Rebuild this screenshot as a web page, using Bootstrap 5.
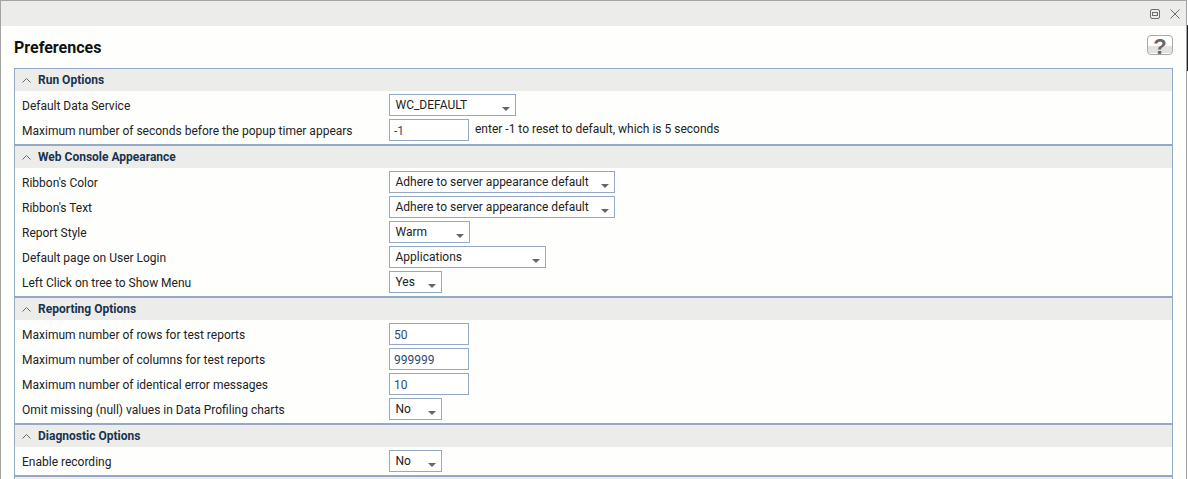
<!DOCTYPE html>
<html lang="en">
<head>
<meta charset="utf-8">
<title>Preferences</title>
<link href="https://cdn.jsdelivr.net/npm/bootstrap@5.3.0/dist/css/bootstrap.min.css" rel="stylesheet">
<style>
html,body{height:479px;overflow:hidden;background:#fff}
body{font-family:Roboto,"Liberation Sans",sans-serif;font-size:12px;color:#222}
.win{position:relative;height:479px;width:1187px;border-top:1px solid #a3a5a2;border-left:1px solid #a3a5a2;border-right:1px solid #a3a5a2;background:#fefffd;overflow:hidden}
.edge-mark{position:fixed;left:1187px;top:25px;width:1px;height:46px;background:#222}
.win-bar{height:25px;background:#ecedeb;padding-right:6px;gap:10px}
.win-bar svg{display:block}
.win-body{padding:0 13px}
.page-head{height:42px;padding-top:9px}
.page-title{font-size:16px;font-weight:700;line-height:22px;color:#111;margin:2px 0 0}
.help-btn{width:26px;height:20px;border:1px solid #a9a9a9;border-radius:4px;background:linear-gradient(#fff 0,#fff 58%,#e2e2e2 58%,#e2e2e2 92%,#fff 92%);color:#666;font-size:22px;font-weight:700;line-height:18px;padding:2px 0 0;text-align:center;font-family:"Liberation Sans",sans-serif}
.pref-panel{border:1px solid #93a9c6;border-bottom:0}
.pref-sec+.pref-sec{border-top:2px solid #93a9c6}
.sec-head{height:22px;background:#ecedeb;color:#19334f;font-weight:700;padding-left:7px;gap:7px;line-height:22px}
.sec-rows{padding:3px 0;gap:3px}
.pref-row{height:22px;padding-left:7px}
.pref-lab{width:367px;padding-top:4px;line-height:16px;color:#222}
.fld{height:22px;border:1px solid #93a9c6;background:#fff;line-height:18px;padding:1px 5.5px 0;color:#222;position:relative;display:block;flex:none}
.fld-in{width:80px;color:#2e4a6b;padding:2px 4px 0}
.fld-sel::after{content:"";position:absolute;right:5px;top:12px;border-left:4px solid transparent;border-right:4px solid transparent;border-top:4px solid #666}
.hint{margin-left:6px;padding-top:1px;line-height:18px;color:#222}
.w-a{width:127px}.w-b{width:226px}.w-c{width:81px}.w-d{width:157px}.w-e{width:53px}
</style>
</head>
<body>
<div class="win">
  <div class="win-bar d-flex justify-content-end align-items-center">
    <svg width="10" height="10" viewBox="0 0 10 10" fill="none" stroke="#6f6f6f"><rect x=".5" y=".5" width="9" height="9" rx="1.5"/><rect x="2.5" y="3.5" width="5" height="3"/></svg>
    <svg width="10" height="10" viewBox="0 0 10 10" fill="none" stroke="#6f6f6f" stroke-width="1"><path d="M.5.5l9 9M9.5.5l-9 9"/></svg>
  </div>
  <div class="win-body">
    <div class="page-head d-flex justify-content-between align-items-start">
      <h1 class="page-title">Preferences</h1>
      <button type="button" class="help-btn">?</button>
    </div>
    <div class="pref-panel">
      <section class="pref-sec">
        <div class="sec-head d-flex align-items-center"><svg width="9" height="5" viewBox="0 0 9 5" fill="none" stroke="#666"><path d="M.5 4.5l4-4 4 4"/></svg><span>Run Options</span></div>
        <div class="sec-rows d-flex flex-column">
          <div class="pref-row d-flex"><div class="pref-lab">Default Data Service</div><div class="fld fld-sel w-a">WC_DEFAULT</div></div>
          <div class="pref-row d-flex"><div class="pref-lab">Maximum number of seconds before the popup timer appears</div><div class="fld fld-in">-1</div><div class="hint">enter -1 to reset to default, which is 5 seconds</div></div>
        </div>
      </section>
      <section class="pref-sec">
        <div class="sec-head d-flex align-items-center"><svg width="9" height="5" viewBox="0 0 9 5" fill="none" stroke="#666"><path d="M.5 4.5l4-4 4 4"/></svg><span>Web Console Appearance</span></div>
        <div class="sec-rows d-flex flex-column">
          <div class="pref-row d-flex"><div class="pref-lab">Ribbon's Color</div><div class="fld fld-sel w-b">Adhere to server appearance default</div></div>
          <div class="pref-row d-flex"><div class="pref-lab">Ribbon's Text</div><div class="fld fld-sel w-b">Adhere to server appearance default</div></div>
          <div class="pref-row d-flex"><div class="pref-lab">Report Style</div><div class="fld fld-sel w-c">Warm</div></div>
          <div class="pref-row d-flex"><div class="pref-lab">Default page on User Login</div><div class="fld fld-sel w-d">Applications</div></div>
          <div class="pref-row d-flex"><div class="pref-lab">Left Click on tree to Show Menu</div><div class="fld fld-sel w-e">Yes</div></div>
        </div>
      </section>
      <section class="pref-sec">
        <div class="sec-head d-flex align-items-center"><svg width="9" height="5" viewBox="0 0 9 5" fill="none" stroke="#666"><path d="M.5 4.5l4-4 4 4"/></svg><span>Reporting Options</span></div>
        <div class="sec-rows d-flex flex-column">
          <div class="pref-row d-flex"><div class="pref-lab">Maximum number of rows for test reports</div><div class="fld fld-in">50</div></div>
          <div class="pref-row d-flex"><div class="pref-lab">Maximum number of columns for test reports</div><div class="fld fld-in">999999</div></div>
          <div class="pref-row d-flex"><div class="pref-lab">Maximum number of identical error messages</div><div class="fld fld-in">10</div></div>
          <div class="pref-row d-flex"><div class="pref-lab">Omit missing (null) values in Data Profiling charts</div><div class="fld fld-sel w-e">No</div></div>
        </div>
      </section>
      <section class="pref-sec">
        <div class="sec-head d-flex align-items-center"><svg width="9" height="5" viewBox="0 0 9 5" fill="none" stroke="#666"><path d="M.5 4.5l4-4 4 4"/></svg><span>Diagnostic Options</span></div>
        <div class="sec-rows d-flex flex-column">
          <div class="pref-row d-flex"><div class="pref-lab">Enable recording</div><div class="fld fld-sel w-e">No</div></div>
        </div>
      </section>
      <section class="pref-sec"><div class="sec-head"></div></section>
    </div>
  </div>
</div>
<div class="edge-mark"></div>
<script src="https://cdn.jsdelivr.net/npm/bootstrap@5.3.0/dist/js/bootstrap.bundle.min.js"></script>
</body>
</html>
